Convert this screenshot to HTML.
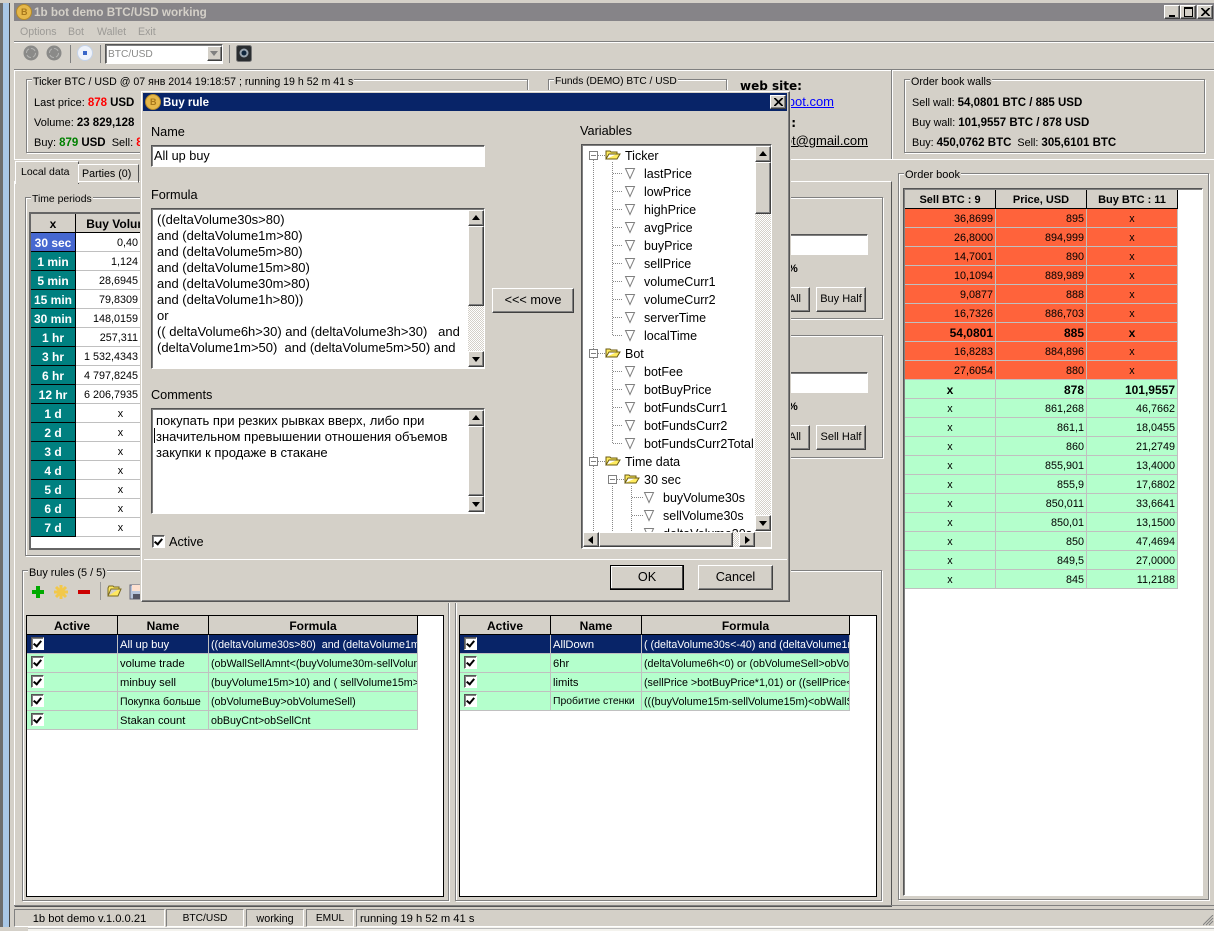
<!DOCTYPE html>
<html><head><meta charset="utf-8"><style>
html,body{margin:0;padding:0}
body{width:1214px;height:931px;position:relative;overflow:hidden;background:#d4d0c8;font:11px/16px "Liberation Sans","DejaVu Sans",sans-serif;color:#000}
div,span,table,svg{position:absolute}
.t{white-space:nowrap;margin-top:1px}
.b{font-weight:bold}
td span,td div,b{position:static}
b{font-size:11.5px}
.g{border:1px solid #808080;box-shadow:1px 1px 0 #fff,inset 1px 1px 0 #fff}
.l{background:#d4d0c8;padding:0 1px;white-space:nowrap}
.s{background:#fff;border:1px solid;border-color:#555 #fff #fff #555;box-shadow:inset 1px 1px 0 #808080}
.btn{background:#d4d0c8;border:1px solid;border-color:#fff #404040 #404040 #fff;box-shadow:inset -1px -1px 0 #808080;text-align:center;box-sizing:border-box}
.sb{background:repeating-conic-gradient(#fff 0 25%,#d4d0c8 0 50%) 0 0/2px 2px}
table{border-collapse:separate;border-spacing:0;table-layout:fixed}
td{padding:0 2px;height:18px;line-height:16px;border-right:1px solid #c0c0c0;border-bottom:1px solid #c0c0c0;white-space:nowrap;overflow:hidden;box-sizing:content-box;font-size:10.8px;vertical-align:bottom}
.h td{background:#d4d0c8;font-weight:bold;text-align:center;border-color:#000;padding:0;font-size:12px}
.ob .h td{font-size:11px}
.r{text-align:right;padding-right:2px}.c{text-align:center}
.red td{background:#ff633b}.grn td{background:#b4ffcc}
.bd td{font-weight:bold;font-size:12px}
.sel td{background:#082468;color:#fff}
.ru td{font-size:11.2px}
.ru td:first-child{padding-left:4px}
.ru td:last-child{font-size:10.7px}
.ru .h td{font-size:12px;padding:0}
.cb{display:inline-block;width:11px;height:11px;background:#fff;border:1px solid;border-color:#555 #fff #fff #555;position:relative;vertical-align:top;margin-top:0;box-shadow:inset 1px 1px 0 #808080}
.cb:after{content:"";position:absolute;left:3px;top:1px;width:3px;height:6px;border:solid #000;border-width:0 2px 2px 0;transform:rotate(40deg)}
.tp td{border-color:#c0c0c0;background:#fff}
.tp .h td{border-color:#000;background:#d4d0c8}
.tp .n{background:#008080;color:#fff;font-weight:bold;text-align:center;border-color:#000;padding:0;font-size:12px}
.tree span{font-size:12.5px}
.mm{font-size:12.7px;line-height:16px;white-space:nowrap}
.m2{font-size:13px;line-height:16px;white-space:nowrap}
.line{background:#808080}
.tri{width:0;height:0;border-style:solid}
.st{border:1px solid;border-color:#808080 #fff #fff #808080}
</style></head><body>

<!-- desktop strip -->
<div style="left:0;top:0;width:3px;height:931px;background:#6e6e6e"></div>
<div style="left:3px;top:0;width:6px;height:931px;background:#a9c7e6"></div>
<div style="left:9px;top:0;width:1px;height:931px;background:#444"></div>
<div style="left:10px;top:0;width:4px;height:931px;background:#d4d0c8"></div>
<div style="left:0;top:0;width:1214px;height:3px;background:#d4d0c8"></div>

<!-- title bar -->
<div style="left:14px;top:3px;width:1200px;height:18px;background:#868488"></div>
<svg style="left:16px;top:4px" width="16" height="16"><circle cx="8" cy="8" r="7.5" fill="#e6b84a" stroke="#b58a2a"/></svg>
<span class="t" style="left:21px;top:4px;font-size:9px;font-weight:bold;color:#a8781c;line-height:14px">B</span>
<span class="t b" style="left:34px;top:4px;color:#d4d0c8;font-size:11.7px">1b bot demo BTC/USD working</span>
<div class="btn" style="left:1164px;top:5px;width:16px;height:14px"><div style="left:4px;top:9px;width:6px;height:2px;background:#000"></div></div>
<div class="btn" style="left:1180px;top:5px;width:16px;height:14px"><div style="left:3px;top:1px;width:7px;height:7px;border:1px solid #000;border-top-width:2px"></div></div>
<div class="btn" style="left:1197px;top:5px;width:16px;height:14px"><svg style="left:3px;top:2px" width="9" height="8"><path d="M0 0L8 8M1 0L9 8M8 0L0 8M9 0L1 8" stroke="#000"/></svg></div>

<!-- menu -->
<span class="t" style="left:20px;top:23px;color:#9c9a96;font-size:10.6px">Options</span>
<span class="t" style="left:68px;top:23px;color:#9c9a96;font-size:10.6px">Bot</span>
<span class="t" style="left:97px;top:23px;color:#9c9a96;font-size:10.6px">Wallet</span>
<span class="t" style="left:138px;top:23px;color:#9c9a96;font-size:10.6px">Exit</span>
<div class="line" style="left:14px;top:41px;width:1200px;height:1px"></div>
<div style="left:14px;top:42px;width:1200px;height:1px;background:#fff"></div>

<!-- toolbar -->
<svg style="left:22px;top:44px" width="90" height="20">
<circle cx="9" cy="9" r="7.5" fill="#8a8a88"/><circle cx="9" cy="9" r="4.5" fill="none" stroke="#b5b5b3" stroke-dasharray="5 2"/>
<circle cx="32" cy="9" r="7.5" fill="#8a8a88"/><circle cx="32" cy="9" r="4.5" fill="none" stroke="#b5b5b3" stroke-dasharray="5 2"/>
<circle cx="63" cy="9" r="7.5" fill="#eef2fa" stroke="#c4d2e8"/><rect x="61" y="7" width="4" height="4" fill="#3a66c8"/>
</svg>
<div class="line" style="left:70px;top:45px;width:1px;height:18px"></div>
<div class="line" style="left:100px;top:45px;width:1px;height:18px"></div>
<div class="line" style="left:229px;top:45px;width:1px;height:18px"></div>
<div class="s" style="left:105px;top:44px;width:116px;height:18px"></div>
<span class="t" style="left:108px;top:46px;color:#8a8a88;font-size:10.2px">BTC/USD</span>
<div class="btn" style="left:207px;top:46px;width:15px;height:15px"><div class="tri" style="left:2px;top:4px;border-width:5px 4px 0;border-color:#808080 transparent transparent"></div></div>
<svg style="left:236px;top:45px" width="16" height="17"><rect x=".5" y=".5" width="15" height="16" rx="2" fill="#2a2d30" stroke="#777"/><circle cx="8" cy="8" r="4.5" fill="#9aa4ae"/><circle cx="8" cy="8" r="2.5" fill="#10263c"/></svg>

<!-- panel top -->
<div class="line" style="left:14px;top:69px;width:1200px;height:1px"></div>
<div style="left:14px;top:70px;width:1200px;height:1px;background:#fff"></div>
<div style="left:14px;top:70px;width:1px;height:90px;background:#fff"></div>
<div style="left:891px;top:70px;width:1px;height:90px;background:#808080"></div>
<div style="left:892px;top:70px;width:1px;height:90px;background:#fff"></div>
<div style="left:14px;top:159px;width:1200px;height:1px;background:#fff"></div>

<div class="g" style="left:26px;top:79px;width:500px;height:72px"></div>
<span class="t l" style="left:32px;top:73px;font-size:10.6px">Ticker BTC / USD @ 07 янв 2014 19:18:57 ; running 19 h 52 m 41 s</span>
<span class="t" style="left:34px;top:94px;font-size:11px">Last price: <b style="color:#f00">878</b> <b>USD</b></span>
<span class="t" style="left:34px;top:114px">Volume: <b>23 829,128</b></span>
<span class="t" style="left:34px;top:134px">Buy: <b style="color:#008000">879</b> <b>USD</b>&nbsp; Sell: <b style="color:#f00">878</b></span>

<div class="g" style="left:548px;top:79px;width:177px;height:72px"></div>
<span class="t l" style="left:554px;top:73px;font-size:10.2px">Funds (DEMO) BTC / USD</span>

<span class="t" style="left:740px;top:77px;font:bold 12px/16px 'DejaVu Sans',sans-serif">web site:</span>
<span class="t" style="left:740px;top:93px;width:94px;text-align:right;color:#00f;font-size:13px;text-decoration:underline">1bbot.com</span>
<span class="t" style="left:740px;top:114px;font:bold 12px/16px 'DejaVu Sans',sans-serif;width:56px;text-align:right">mail:</span>
<span class="t" style="left:740px;top:132px;width:128px;text-align:right;font-size:13px;text-decoration:underline">1bbot@gmail.com</span>

<div class="g" style="left:904px;top:79px;width:299px;height:72px"></div>
<span class="t l" style="left:910px;top:73px;font-size:10.7px">Order book walls</span>
<span class="t" style="left:912px;top:94px;font-size:10.8px">Sell wall: <b>54,0801 BTC / 885 USD</b></span>
<span class="t" style="left:912px;top:114px;font-size:10.8px">Buy wall: <b>101,9557 BTC / 878 USD</b></span>
<span class="t" style="left:912px;top:134px;font-size:10.8px">Buy: <b>450,0762 BTC</b>&nbsp; Sell: <b>305,6101 BTC</b></span>

<!-- tab page -->
<div style="left:14px;top:181px;width:876px;height:724px;border:1px solid;border-color:#fff #555 #555 #fff"></div>
<div style="left:15px;top:161px;width:62px;height:22px;background:#d4d0c8;border:1px solid;border-color:#fff #555 #d4d0c8 #fff;border-bottom:0"></div>
<span class="t" style="left:21px;top:163px;font-size:10.5px">Local data</span>
<div style="left:78px;top:164px;width:59px;height:17px;border:1px solid;border-color:#fff #555 #d4d0c8 #fff"></div>
<span class="t" style="left:82px;top:165px;font-size:10.7px">Parties (0)</span>

<!-- time periods -->
<div class="g" style="left:25px;top:197px;width:300px;height:357px"></div>
<span class="t l" style="left:31px;top:191px;font-size:10.4px">Time periods</span>
<div style="left:29px;top:212px;width:200px;height:338px;background:#fff;border:2px solid #666;border-right:0;box-sizing:border-box"></div>
<table class="tp" style="left:31px;top:214px;width:135px">
<colgroup><col style="width:45px"><col style="width:90px"></colgroup>
<tr class="h"><td>x</td><td>Buy Volume</td></tr>
<tr><td class="n" style="background:#4668d0">30 sec</td><td class="r" style="padding-right:27px">0,40</td></tr>
<tr><td class="n">1 min</td><td class="r" style="padding-right:27px">1,124</td></tr>
<tr><td class="n">5 min</td><td class="r" style="padding-right:27px">28,6945</td></tr>
<tr><td class="n">15 min</td><td class="r" style="padding-right:27px">79,8309</td></tr>
<tr><td class="n">30 min</td><td class="r" style="padding-right:27px">148,0159</td></tr>
<tr><td class="n">1 hr</td><td class="r" style="padding-right:27px">257,311</td></tr>
<tr><td class="n">3 hr</td><td class="r" style="padding-right:27px">1 532,4343</td></tr>
<tr><td class="n">6 hr</td><td class="r" style="padding-right:27px">4 797,8245</td></tr>
<tr><td class="n">12 hr</td><td class="r" style="padding-right:27px">6 206,7935</td></tr>
<tr><td class="n">1 d</td><td class="c">x</td></tr>
<tr><td class="n">2 d</td><td class="c">x</td></tr>
<tr><td class="n">3 d</td><td class="c">x</td></tr>
<tr><td class="n">4 d</td><td class="c">x</td></tr>
<tr><td class="n">5 d</td><td class="c">x</td></tr>
<tr><td class="n">6 d</td><td class="c">x</td></tr>
<tr><td class="n">7 d</td><td class="c">x</td></tr>
</table>

<!-- behind-dialog right groups -->
<div class="g" style="left:700px;top:197px;width:181px;height:120px"></div>
<div class="s" style="left:700px;top:234px;width:166px;height:19px"></div>
<span class="t b" style="left:788px;top:260px;font-size:11px">%</span>
<div class="btn" style="left:740px;top:287px;width:70px;height:25px;line-height:23px;text-align:right;padding-right:8px">All</div>
<div class="btn" style="left:816px;top:287px;width:50px;height:25px;line-height:23px">Buy Half</div>
<div class="g" style="left:700px;top:335px;width:181px;height:121px"></div>
<div class="s" style="left:700px;top:372px;width:166px;height:19px"></div>
<span class="t b" style="left:788px;top:398px;font-size:11px">%</span>
<div class="btn" style="left:740px;top:425px;width:70px;height:25px;line-height:23px;text-align:right;padding-right:8px">All</div>
<div class="btn" style="left:816px;top:425px;width:50px;height:25px;line-height:23px">Sell Half</div>

<!-- buy rules -->
<div class="g" style="left:22px;top:570px;width:425px;height:329px"></div>
<span class="t l" style="left:28px;top:564px;font-size:10.9px">Buy rules (5 / 5)</span>
<svg style="left:30px;top:582px" width="125" height="20">
<path d="M8 4v12M2 10h12" stroke="#0a0" stroke-width="4"/>
<g stroke="#f2c84a" stroke-width="3"><path d="M31 3v14M24 10h14M26 5l10 10M36 5l-10 10"/></g>
<path d="M48 10h12" stroke="#c00" stroke-width="4"/>
<rect x="70" y="0" width="1" height="18" fill="#999"/>
<path d="M78 14V6l1-2h4l1 1h5v2h-8l-3 7h10l3-7h-2" fill="#ffe860" stroke="#7a6a20"/>
<rect x="100" y="3" width="13" height="14" fill="#b8c4dc" stroke="#667"/><rect x="102" y="3" width="9" height="6" fill="#fde0d0"/><rect x="103" y="12" width="7" height="5" fill="#556"/>
</svg>
<div style="left:26px;top:615px;width:416px;height:280px;background:#fff;border:1px solid #000"></div>
<table class="ru" style="left:27px;top:616px;width:391px">
<colgroup><col style="width:91px"><col style="width:91px"><col style="width:209px"></colgroup>
<tr class="h"><td>Active</td><td>Name</td><td>Formula</td></tr>
<tr class="sel"><td><span class="cb"></span></td><td>All up buy</td><td>((deltaVolume30s&gt;80)&nbsp; and (deltaVolume1m&gt;80)</td></tr>
<tr class="grn"><td><span class="cb"></span></td><td>volume trade</td><td>(obWallSellAmnt&lt;(buyVolume30m-sellVolume30m)</td></tr>
<tr class="grn"><td><span class="cb"></span></td><td>minbuy sell</td><td>(buyVolume15m&gt;10) and ( sellVolume15m&gt;10)</td></tr>
<tr class="grn"><td><span class="cb"></span></td><td style="font-size:10.6px">Покупка больше</td><td>(obVolumeBuy&gt;obVolumeSell)</td></tr>
<tr class="grn"><td><span class="cb"></span></td><td>Stakan count</td><td>obBuyCnt&gt;obSellCnt</td></tr>
</table>

<!-- sell rules -->
<div class="g" style="left:455px;top:570px;width:425px;height:329px"></div>
<div style="left:459px;top:615px;width:416px;height:280px;background:#fff;border:1px solid #000"></div>
<table class="ru" style="left:460px;top:616px;width:390px">
<colgroup><col style="width:91px"><col style="width:91px"><col style="width:208px"></colgroup>
<tr class="h"><td>Active</td><td>Name</td><td>Formula</td></tr>
<tr class="sel"><td><span class="cb"></span></td><td>AllDown</td><td>( (deltaVolume30s&lt;-40) and (deltaVolume1m&lt;-40)</td></tr>
<tr class="grn"><td><span class="cb"></span></td><td>6hr</td><td>(deltaVolume6h&lt;0) or (obVolumeSell&gt;obVolumeBuy)</td></tr>
<tr class="grn"><td><span class="cb"></span></td><td>limits</td><td>(sellPrice &gt;botBuyPrice*1,01) or ((sellPrice&lt;bot</td></tr>
<tr class="grn"><td><span class="cb"></span></td><td style="font-size:10.4px">Пробитие стенки</td><td>(((buyVolume15m-sellVolume15m)&lt;obWallSell</td></tr>
</table>

<!-- order book -->
<div class="g" style="left:898px;top:173px;width:309px;height:725px"></div>
<span class="t l" style="left:904px;top:166px;font-size:11px">Order book</span>
<div class="s" style="left:903px;top:188px;width:298px;height:706px"></div>
<table class="ob" style="left:905px;top:190px;width:273px">
<colgroup><col style="width:91px"><col style="width:91px"><col style="width:91px"></colgroup>
<tr class="h"><td>Sell BTC : 9</td><td>Price, USD</td><td>Buy BTC : 11</td></tr>
<tr class="red"><td class="r">36,8699</td><td class="r">895</td><td class="c">x</td></tr>
<tr class="red"><td class="r">26,8000</td><td class="r">894,999</td><td class="c">x</td></tr>
<tr class="red"><td class="r">14,7001</td><td class="r">890</td><td class="c">x</td></tr>
<tr class="red"><td class="r">10,1094</td><td class="r">889,989</td><td class="c">x</td></tr>
<tr class="red"><td class="r">9,0877</td><td class="r">888</td><td class="c">x</td></tr>
<tr class="red"><td class="r">16,7326</td><td class="r">886,703</td><td class="c">x</td></tr>
<tr class="red bd"><td class="r">54,0801</td><td class="r">885</td><td class="c">x</td></tr>
<tr class="red"><td class="r">16,8283</td><td class="r">884,896</td><td class="c">x</td></tr>
<tr class="red"><td class="r">27,6054</td><td class="r">880</td><td class="c">x</td></tr>
<tr class="grn bd"><td class="c">x</td><td class="r">878</td><td class="r">101,9557</td></tr>
<tr class="grn"><td class="c">x</td><td class="r">861,268</td><td class="r">46,7662</td></tr>
<tr class="grn"><td class="c">x</td><td class="r">861,1</td><td class="r">18,0455</td></tr>
<tr class="grn"><td class="c">x</td><td class="r">860</td><td class="r">21,2749</td></tr>
<tr class="grn"><td class="c">x</td><td class="r">855,901</td><td class="r">13,4000</td></tr>
<tr class="grn"><td class="c">x</td><td class="r">855,9</td><td class="r">17,6802</td></tr>
<tr class="grn"><td class="c">x</td><td class="r">850,011</td><td class="r">33,6641</td></tr>
<tr class="grn"><td class="c">x</td><td class="r">850,01</td><td class="r">13,1500</td></tr>
<tr class="grn"><td class="c">x</td><td class="r">850</td><td class="r">47,4694</td></tr>
<tr class="grn"><td class="c">x</td><td class="r">849,5</td><td class="r">27,0000</td></tr>
<tr class="grn"><td class="c">x</td><td class="r">845</td><td class="r">11,2188</td></tr>
</table>

<!-- status bar -->
<div class="line" style="left:14px;top:905px;width:1200px;height:1px"></div>
<div class="st" style="left:14px;top:909px;width:149px;height:16px"></div>
<span class="t" style="left:14px;top:910px;width:151px;text-align:center;font-size:11.2px">1b bot demo v.1.0.0.21</span>
<div class="st" style="left:166px;top:909px;width:76px;height:16px"></div>
<span class="t" style="left:166px;top:910px;width:78px;text-align:center;font-size:10.2px">BTC/USD</span>
<div class="st" style="left:246px;top:909px;width:56px;height:16px"></div>
<span class="t" style="left:246px;top:910px;width:58px;text-align:center;font-size:10.8px">working</span>
<div class="st" style="left:306px;top:909px;width:46px;height:16px"></div>
<span class="t" style="left:306px;top:910px;width:48px;text-align:center;font-size:10.2px">EMUL</span>
<div class="st" style="left:356px;top:909px;width:860px;height:16px;border-right:0"></div>
<span class="t" style="left:360px;top:910px;font-size:11.2px">running 19 h 52 m 41 s</span>
<svg style="left:1203px;top:915px" width="11" height="11"><path d="M0 10L10 0M3 10L10 3M6 10L10 6" stroke="#808080"/></svg>
<div style="left:0;top:927px;width:1214px;height:4px;background:#f4f3ee"></div>
<div style="left:0;top:927px;width:28px;height:4px;background:#d4d0c8"></div>
<div style="left:28px;top:928px;width:1186px;height:1px;background:#bbb"></div>

<!-- DIALOG -->
<div style="left:141px;top:91px;width:647px;height:509px;background:#d4d0c8;border:1px solid;border-color:#fff #555 #555 #fff;box-shadow:inset -1px -1px 0 #808080,0 0 0 1px #d4d0c8"></div>
<div style="left:143px;top:93px;width:644px;height:18px;background:#082468"></div>
<svg style="left:145px;top:94px" width="16" height="16"><circle cx="8" cy="8" r="7.5" fill="#e6b84a" stroke="#b58a2a"/></svg>
<span class="t" style="left:150px;top:94px;font-size:9px;font-weight:bold;color:#a8781c;line-height:14px">B</span>
<span class="t b" style="left:163px;top:94px;color:#fff;font-size:11.5px">Buy rule</span>
<div class="btn" style="left:770px;top:95px;width:16px;height:14px"><svg style="left:3px;top:2px" width="9" height="8"><path d="M0 0L8 8M1 0L9 8M8 0L0 8M9 0L1 8" stroke="#000"/></svg></div>

<span class="t mm" style="left:151px;top:123px">Name</span>
<div class="s" style="left:151px;top:145px;width:332px;height:20px"></div>
<span class="t mm" style="left:154px;top:147px">All up buy</span>

<span class="t mm" style="left:151px;top:186px">Formula</span>
<div class="s" style="left:151px;top:208px;width:332px;height:159px"></div>
<div class="t m2" style="left:157px;top:211px">((deltaVolume30s&gt;80)<br>and (deltaVolume1m&gt;80)<br>and (deltaVolume5m&gt;80)<br>and (deltaVolume15m&gt;80)<br>and (deltaVolume30m&gt;80)<br>and (deltaVolume1h&gt;80))<br>or<br>(( deltaVolume6h&gt;30) and (deltaVolume3h&gt;30)&nbsp;&nbsp; and<br>(deltaVolume1m&gt;50)&nbsp; and (deltaVolume5m&gt;50) and</div>
<div class="sb" style="left:468px;top:210px;width:16px;height:157px"></div>
<div class="btn" style="left:468px;top:210px;width:16px;height:16px"><div class="tri" style="left:3px;top:4px;border-width:0 4px 5px;border-color:transparent transparent #000"></div></div>
<div class="btn" style="left:468px;top:226px;width:16px;height:80px"></div>
<div class="btn" style="left:468px;top:351px;width:16px;height:16px"><div class="tri" style="left:3px;top:5px;border-width:5px 4px 0;border-color:#000 transparent transparent"></div></div>

<span class="t mm" style="left:151px;top:386px">Comments</span>
<div class="s" style="left:151px;top:408px;width:332px;height:104px"></div>
<div class="t m2" style="left:156px;top:412px">покупать при резких рывках вверх, либо при<br>значительном превышении отношения объемов<br>закупки к продаже в стакане</div>
<div style="left:154px;top:428px;width:1px;height:15px;background:#000"></div>
<div class="btn" style="left:468px;top:410px;width:16px;height:16px"><div class="tri" style="left:3px;top:4px;border-width:0 4px 5px;border-color:transparent transparent #000"></div></div>
<div class="btn" style="left:468px;top:426px;width:16px;height:70px"></div>
<div class="btn" style="left:468px;top:496px;width:16px;height:16px"><div class="tri" style="left:3px;top:5px;border-width:5px 4px 0;border-color:#000 transparent transparent"></div></div>

<div class="cb" style="position:absolute;left:152px;top:535px;margin:0"></div>
<span class="t mm" style="left:169px;top:533px">Active</span>

<div class="btn" style="left:492px;top:288px;width:82px;height:25px;line-height:23px;font-size:12.7px">&lt;&lt;&lt; move</div>

<span class="t mm" style="left:580px;top:122px">Variables</span>
<div class="s" style="left:581px;top:144px;width:189px;height:403px"></div>

<div class="tree" style="left:583px;top:146px;width:172px;height:386px;overflow:hidden">
 <svg style="left:0;top:0" width="172" height="386" stroke="#888" stroke-dasharray="1 1" fill="none">
  <path d="M10.5 14V203M10.5 212V311M10.5 320V386M29.5 16V189M29.5 214V297M29.5 340V386M48.5 340V386"/>
  <path d="M15 9.5h7M30 27.5h10M30 45.5h10M30 63.5h10M30 81.5h10M30 99.5h10M30 117.5h10M30 135.5h10M30 153.5h10M30 171.5h10M30 189.5h10M15 207.5h7M30 225.5h10M30 243.5h10M30 261.5h10M30 279.5h10M30 297.5h10M15 315.5h7M34 333.5h7M49 351.5h11M49 369.5h11"/>
  <g stroke-dasharray="none" stroke="#808080">
   <rect x="6.5" y="5.5" width="8" height="8" fill="#fff"/><path d="M8 9.5h5"/>
   <rect x="6.5" y="203.5" width="8" height="8" fill="#fff"/><path d="M8 207.5h5"/>
   <rect x="6.5" y="311.5" width="8" height="8" fill="#fff"/><path d="M8 315.5h5"/>
   <rect x="25.5" y="329.5" width="8" height="8" fill="#fff"/><path d="M27 333.5h5"/>
  </g>
  <g stroke-dasharray="none" stroke="#6a5a10" fill="#ffec60">
   <path d="M23 13V5h4l1 1h6v2h-8l-3 5h11l3-5h-3"/>
   <path d="M23 211V203h4l1 1h6v2h-8l-3 5h11l3-5h-3"/>
   <path d="M23 319V311h4l1 1h6v2h-8l-3 5h11l3-5h-3"/>
   <path d="M42 337V329h4l1 1h6v2h-8l-3 5h11l3-5h-3"/>
  </g>
  <g stroke-dasharray="none" stroke="#808080">
   <path d="M42.5 22.5h9l-4.5 10zM42.5 40.5h9l-4.5 10zM42.5 58.5h9l-4.5 10zM42.5 76.5h9l-4.5 10zM42.5 94.5h9l-4.5 10zM42.5 112.5h9l-4.5 10zM42.5 130.5h9l-4.5 10zM42.5 148.5h9l-4.5 10zM42.5 166.5h9l-4.5 10zM42.5 184.5h9l-4.5 10zM42.5 220.5h9l-4.5 10zM42.5 238.5h9l-4.5 10zM42.5 256.5h9l-4.5 10zM42.5 274.5h9l-4.5 10zM42.5 292.5h9l-4.5 10zM61.5 346.5h9l-4.5 10zM61.5 364.5h9l-4.5 10zM61.5 382.5h9l-4.5 10z"/>
  </g>
 </svg>
 <span class="t" style="left:42px;top:1px">Ticker</span>
 <span class="t" style="left:61px;top:19px">lastPrice</span>
 <span class="t" style="left:61px;top:37px">lowPrice</span>
 <span class="t" style="left:61px;top:55px">highPrice</span>
 <span class="t" style="left:61px;top:73px">avgPrice</span>
 <span class="t" style="left:61px;top:91px">buyPrice</span>
 <span class="t" style="left:61px;top:109px">sellPrice</span>
 <span class="t" style="left:61px;top:127px">volumeCurr1</span>
 <span class="t" style="left:61px;top:145px">volumeCurr2</span>
 <span class="t" style="left:61px;top:163px">serverTime</span>
 <span class="t" style="left:61px;top:181px">localTime</span>
 <span class="t" style="left:42px;top:199px">Bot</span>
 <span class="t" style="left:61px;top:217px">botFee</span>
 <span class="t" style="left:61px;top:235px">botBuyPrice</span>
 <span class="t" style="left:61px;top:253px">botFundsCurr1</span>
 <span class="t" style="left:61px;top:271px">botFundsCurr2</span>
 <span class="t" style="left:61px;top:289px">botFundsCurr2Total</span>
 <span class="t" style="left:42px;top:307px">Time data</span>
 <span class="t" style="left:61px;top:325px">30 sec</span>
 <span class="t" style="left:80px;top:343px">buyVolume30s</span>
 <span class="t" style="left:80px;top:361px">sellVolume30s</span>
 <span class="t" style="left:80px;top:379px">deltaVolume30s</span>
</div>
<div class="sb" style="left:755px;top:146px;width:16px;height:385px"></div>
<div class="btn" style="left:755px;top:146px;width:16px;height:16px"><div class="tri" style="left:3px;top:4px;border-width:0 4px 5px;border-color:transparent transparent #000"></div></div>
<div class="btn" style="left:755px;top:162px;width:16px;height:52px"></div>
<div class="btn" style="left:755px;top:515px;width:16px;height:16px"><div class="tri" style="left:3px;top:5px;border-width:5px 4px 0;border-color:#000 transparent transparent"></div></div>
<div style="left:583px;top:532px;width:188px;height:15px;background:#d4d0c8"></div>
<div class="sb" style="left:583px;top:532px;width:172px;height:15px"></div>
<div class="btn" style="left:583px;top:532px;width:16px;height:15px"><div class="tri" style="left:4px;top:3px;border-width:4px 5px 4px 0;border-color:transparent #000 transparent transparent"></div></div>
<div class="btn" style="left:599px;top:532px;width:134px;height:15px"></div>
<div class="btn" style="left:739px;top:532px;width:16px;height:15px"><div class="tri" style="left:5px;top:3px;border-width:4px 0 4px 5px;border-color:transparent transparent transparent #000"></div></div>

<div style="left:144px;top:559px;width:643px;height:1px;background:#fff"></div>
<div class="btn" style="left:610px;top:565px;width:74px;height:25px;border:1px solid #000;box-shadow:inset -1px -1px 0 #404040,inset 1px 1px 0 #fff;line-height:23px;font-size:12.7px">OK</div>
<div class="btn" style="left:698px;top:565px;width:75px;height:25px;line-height:23px;font-size:12.7px">Cancel</div>
</body></html>
